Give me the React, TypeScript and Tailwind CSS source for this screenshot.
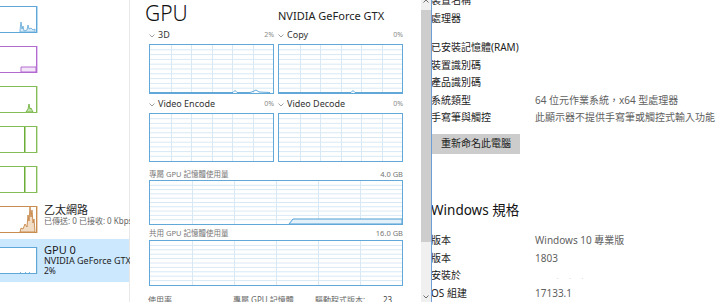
import type { ReactNode } from 'react';

const FONT = '"Noto Sans", "Noto Sans CJK TC", sans-serif';

function Thumb({ color, light, children }: { color: string; light: string; children?: ReactNode }) {
  return (
    <div className="relative h-[27px] w-[37px] shrink-0 border-y border-r bg-white" style={{ borderColor: color }}>
      <div className="absolute right-[-2px] top-[-1px] h-[27px] w-px" style={{ background: light }} />
      <svg width={36} height={25} className="block">
        {children}
      </svg>
    </div>
  );
}

function Sidebar() {
  return (
    <div className="flex w-[130px] shrink-0 flex-col border-r border-[#e8e8e8] bg-white">
      <div className="h-[40px] pt-[6px]">
        <Thumb color="#5ea7d8" light="#b9dbf0">
          <path d="M20 25 L20 23 L21 15 L22 22 L23 19 L24 24 L27 23 L28 18 L29 22 L31 21 L33 23 L35 22 L35 25 Z" fill="#d6eaf7" stroke="#5ea7d8" strokeWidth={0.8} />
        </Thumb>
      </div>
      <div className="h-[40px] pt-[6px]">
        <Thumb color="#b46bd0" light="#e3c6ef">
          <path d="M21 25 L21 20 L36 20 L36 25 Z" fill="#f3e6f8" stroke="#b46bd0" strokeWidth={1} />
        </Thumb>
      </div>
      <div className="h-[40px] pt-[6px]">
        <Thumb color="#84bd55" light="#cfe6bd">
          <path d="M26 25 L28 22 L29 17 L30 22 L31 21 L33 25 Z" fill="#bfe0a6" stroke="#6aae35" strokeWidth={0.8} />
        </Thumb>
      </div>
      <div className="h-[40px] pt-[6px]">
        <Thumb color="#84bd55" light="#cfe6bd">
          <rect x={24} y={0} width={1.5} height={25} fill="#6aae35" />
        </Thumb>
      </div>
      <div className="h-[40px] pt-[6px]">
        <Thumb color="#84bd55" light="#cfe6bd">
          <rect x={24} y={0} width={1.5} height={25} fill="#6aae35" />
        </Thumb>
      </div>
      <div className="flex h-[39px] items-start gap-[7px]">
        <div className="mt-[6px]">
          <Thumb color="#c98d52" light="#ecd2b8">
            <path d="M20 25 L21 21 L23 22 L25 17 L27 20 L28 8 L29 14 L30 0 L31 10 L32 3 L33 16 L34 12 L35 25 Z" fill="#f1dcc6" stroke="#c07a36" strokeWidth={0.8} />
          </Thumb>
        </div>
        <div className="mt-[4px] flex min-w-0 flex-col whitespace-nowrap">
          <div className="text-[11px] leading-[12px] text-[#222]">乙太網路</div>
          <div className="text-[8px] leading-[10px] text-[#666]">已傳送: 0 已接收: 0 Kbps</div>
        </div>
      </div>
      <div className="flex h-[43px] items-start gap-[7px] bg-[#cce8ff]">
        <div className="mt-[8px]">
          <Thumb color="#5ea7d8" light="#b9dbf0">
            <path d="M20 24.5 L21 24.5 M25 24.5 L26 24.5 M29 24.5 L30 24.5" stroke="#5ea7d8" strokeWidth={0.8} />
          </Thumb>
        </div>
        <div className="mt-[5px] flex min-w-0 flex-col whitespace-nowrap">
          <div className="text-[11px] leading-[11px] text-[#1a1a1a]">GPU 0</div>
          <div className="text-[9px] leading-[11px] text-[#222]">NVIDIA GeForce GTX</div>
          <div className="text-[8.5px] leading-[10px] text-[#222]">2%</div>
        </div>
      </div>
    </div>
  );
}

function Grid({ w, h, cols }: { w: number; h: number; cols: number }) {
  const lines = [];
  for (let i = 1; i < 10; i++) {
    const y = (h * i) / 10;
    lines.push(<line key={'h' + i} x1={0} x2={w} y1={y} y2={y} stroke="#d8e9f5" strokeWidth={1} />);
  }
  for (let i = 1; i < cols; i++) {
    const x = Math.round((w * i) / cols) + 0.5;
    lines.push(<line key={'v' + i} x1={x} x2={x} y1={0} y2={h} stroke="#d8e9f5" strokeWidth={1} />);
  }
  return <>{lines}</>;
}

function Chart({ w, h, cols, children }: { w: number; h: number; cols: number; children?: ReactNode }) {
  return (
    <div className="border border-[#62a8d8] bg-white">
      <svg width={w} height={h} className="block">
        <Grid w={w} h={h} cols={cols} />
        {children}
      </svg>
    </div>
  );
}

function Chevron() {
  return (
    <svg width={6} height={4} className="mr-[3px] mt-[1px] shrink-0">
      <path d="M0.5 0.5 L3 3 L5.5 0.5" fill="none" stroke="#888" strokeWidth={0.8} />
    </svg>
  );
}

function ChartLabel({ name, pct }: { name: string; pct: string }) {
  return (
    <div className="flex h-[18px] items-center">
      <Chevron />
      <span className="text-[9px] text-[#333]">{name}</span>
      <span className="ml-auto text-[7px] text-[#8a8a8a]">{pct}</span>
    </div>
  );
}

function MainPanel() {
  return (
    <div className="flex w-[291px] shrink-0 flex-col bg-white pl-[19px]">
      <div className="grid h-[26px] w-[254px] grid-cols-2 items-end gap-[4px]">
        <div className="-ml-[4px] text-[21px] font-light leading-[26px] text-[#111]">GPU</div>
        <div className="mb-[3px] whitespace-nowrap text-[11px] leading-[14px] text-[#222]">NVIDIA GeForce GTX</div>
      </div>
      <div className="grid w-[254px] grid-cols-2 gap-x-[4px]">
        <ChartLabel name="3D" pct="2%" />
        <ChartLabel name="Copy" pct="0%" />
        <Chart w={123} h={48} cols={6}>
          <path d="M0 47.5 L83 47.5 L85 45.5 L87 47.5 L100 47.5 L103 46.5 L106 45 L109 47 L120 47.5" fill="none" stroke="#4f9ed3" strokeWidth={0.9} />
        </Chart>
        <Chart w={123} h={48} cols={6}>
          <path d="M0 47.5 L72 47.5 L74 45.5 L76 47.5 L123 47.5" fill="none" stroke="#4f9ed3" strokeWidth={0.9} />
        </Chart>
        <div className="h-[1px]" />
        <div className="h-[1px]" />
        <ChartLabel name="Video Encode" pct="0%" />
        <ChartLabel name="Video Decode" pct="0%" />
        <Chart w={123} h={47} cols={6} />
        <Chart w={123} h={47} cols={6} />
      </div>
      <div className="mt-[7px] flex h-[12px] w-[254px] items-center justify-between text-[7.5px] text-[#777]">
        <span>專屬 GPU 記憶體使用量</span>
        <span>4.0 GB</span>
      </div>
      <div className="w-[254px]">
        <Chart w={252} h={43} cols={6}>
          <path d="M139 43 L143 38 L252 38 L252 43 Z" fill="#e4f0fa" stroke="#4f9ed3" strokeWidth={1} />
        </Chart>
      </div>
      <div className="mt-[3px] flex h-[12px] w-[254px] items-center justify-between text-[7.5px] text-[#777]">
        <span>共用 GPU 記憶體使用量</span>
        <span>16.0 GB</span>
      </div>
      <div className="w-[254px]">
        <Chart w={252} h={44} cols={6} />
      </div>
      <div className="mt-[9px] flex w-[260px] -ml-[1px] whitespace-nowrap text-[8px] leading-[10px] text-[#666]">
        <span className="w-[85px]">使用率</span>
        <span className="w-[82px]">專屬 GPU 記憶體</span>
        <span className="w-[68px]">驅動程式版本:</span>
        <span className="text-[#444]">23</span>
      </div>
    </div>
  );
}

function Scrollbar() {
  return (
    <div className="flex w-[10px] shrink-0 flex-col bg-[#f0f0f0]">
      <div className="flex h-[10px] items-start justify-center">
        <svg width={6} height={4} className="-mt-[1px]">
          <path d="M0.5 3.5 L3 1 L5.5 3.5" fill="none" stroke="#606060" strokeWidth={0.9} />
        </svg>
      </div>
      <div className="h-[232px] bg-[#cdcdcd]" />
      <div className="flex-1" />
      <div className="flex h-[10px] items-center justify-center">
        <svg width={6} height={4}>
          <path d="M0.5 0.5 L3 3 L5.5 0.5" fill="none" stroke="#606060" strokeWidth={0.9} />
        </svg>
      </div>
    </div>
  );
}

function Row({ label, value }: { label: string; value?: ReactNode }) {
  return (
    <div className="flex h-[17.5px] items-center whitespace-nowrap text-[10px]">
      <span className="w-[104px] shrink-0 text-[#1b1b1b]">{label}</span>
      <span className="text-[#5f5f5f]">{value}</span>
    </div>
  );
}

function SettingsPanel() {
  return (
    <div className="flex min-w-0 flex-1 flex-col overflow-hidden bg-white">
      <div className="-ml-[1px] -mt-[8px] flex flex-col">
        <Row label="裝置名稱" />
        <Row label="處理器" />
        <div className="h-[12px]" />
        <Row label="已安裝記憶體(RAM)" />
        <Row label="裝置識別碼" />
        <Row label="產品識別碼" />
        <Row label="系統類型" value="64 位元作業系統，x64 型處理器" />
        <Row label="手寫筆與觸控" value="此顯示器不提供手寫筆或觸控式輸入功能" />
      </div>
      <div className="mt-[7px] flex h-[23px] w-[88px] items-center bg-[#cccccc] pl-[9px] text-[10px] text-[#1b1b1b]">
        重新命名此電腦
      </div>
      <div className="mt-[47px] -ml-[1px] text-[13.5px] leading-[18px] text-[#111]">Windows 規格</div>
      <div className="mt-[13px] -ml-[1px] flex flex-col">
        <Row label="版本" value="Windows 10 專業版" />
        <Row label="版本" value="1803" />
        <Row
          label="安裝於"
          value={
            <span className="flex gap-[11px] pl-[22px] pt-[4px] text-[5px] text-[#aaa]">
              <span>.</span>
              <span>.</span>
              <span>.</span>
            </span>
          }
        />
        <Row label="OS 組建" value="17133.1" />
      </div>
    </div>
  );
}

export default function App() {
  return (
    <div className="flex h-[302px] w-[720px] overflow-hidden bg-white" style={{ fontFamily: FONT }}>
      <Sidebar />
      <MainPanel />
      <Scrollbar />
      <div className="w-px shrink-0 bg-[#6d9fd8]" />
      <SettingsPanel />
    </div>
  );
}
